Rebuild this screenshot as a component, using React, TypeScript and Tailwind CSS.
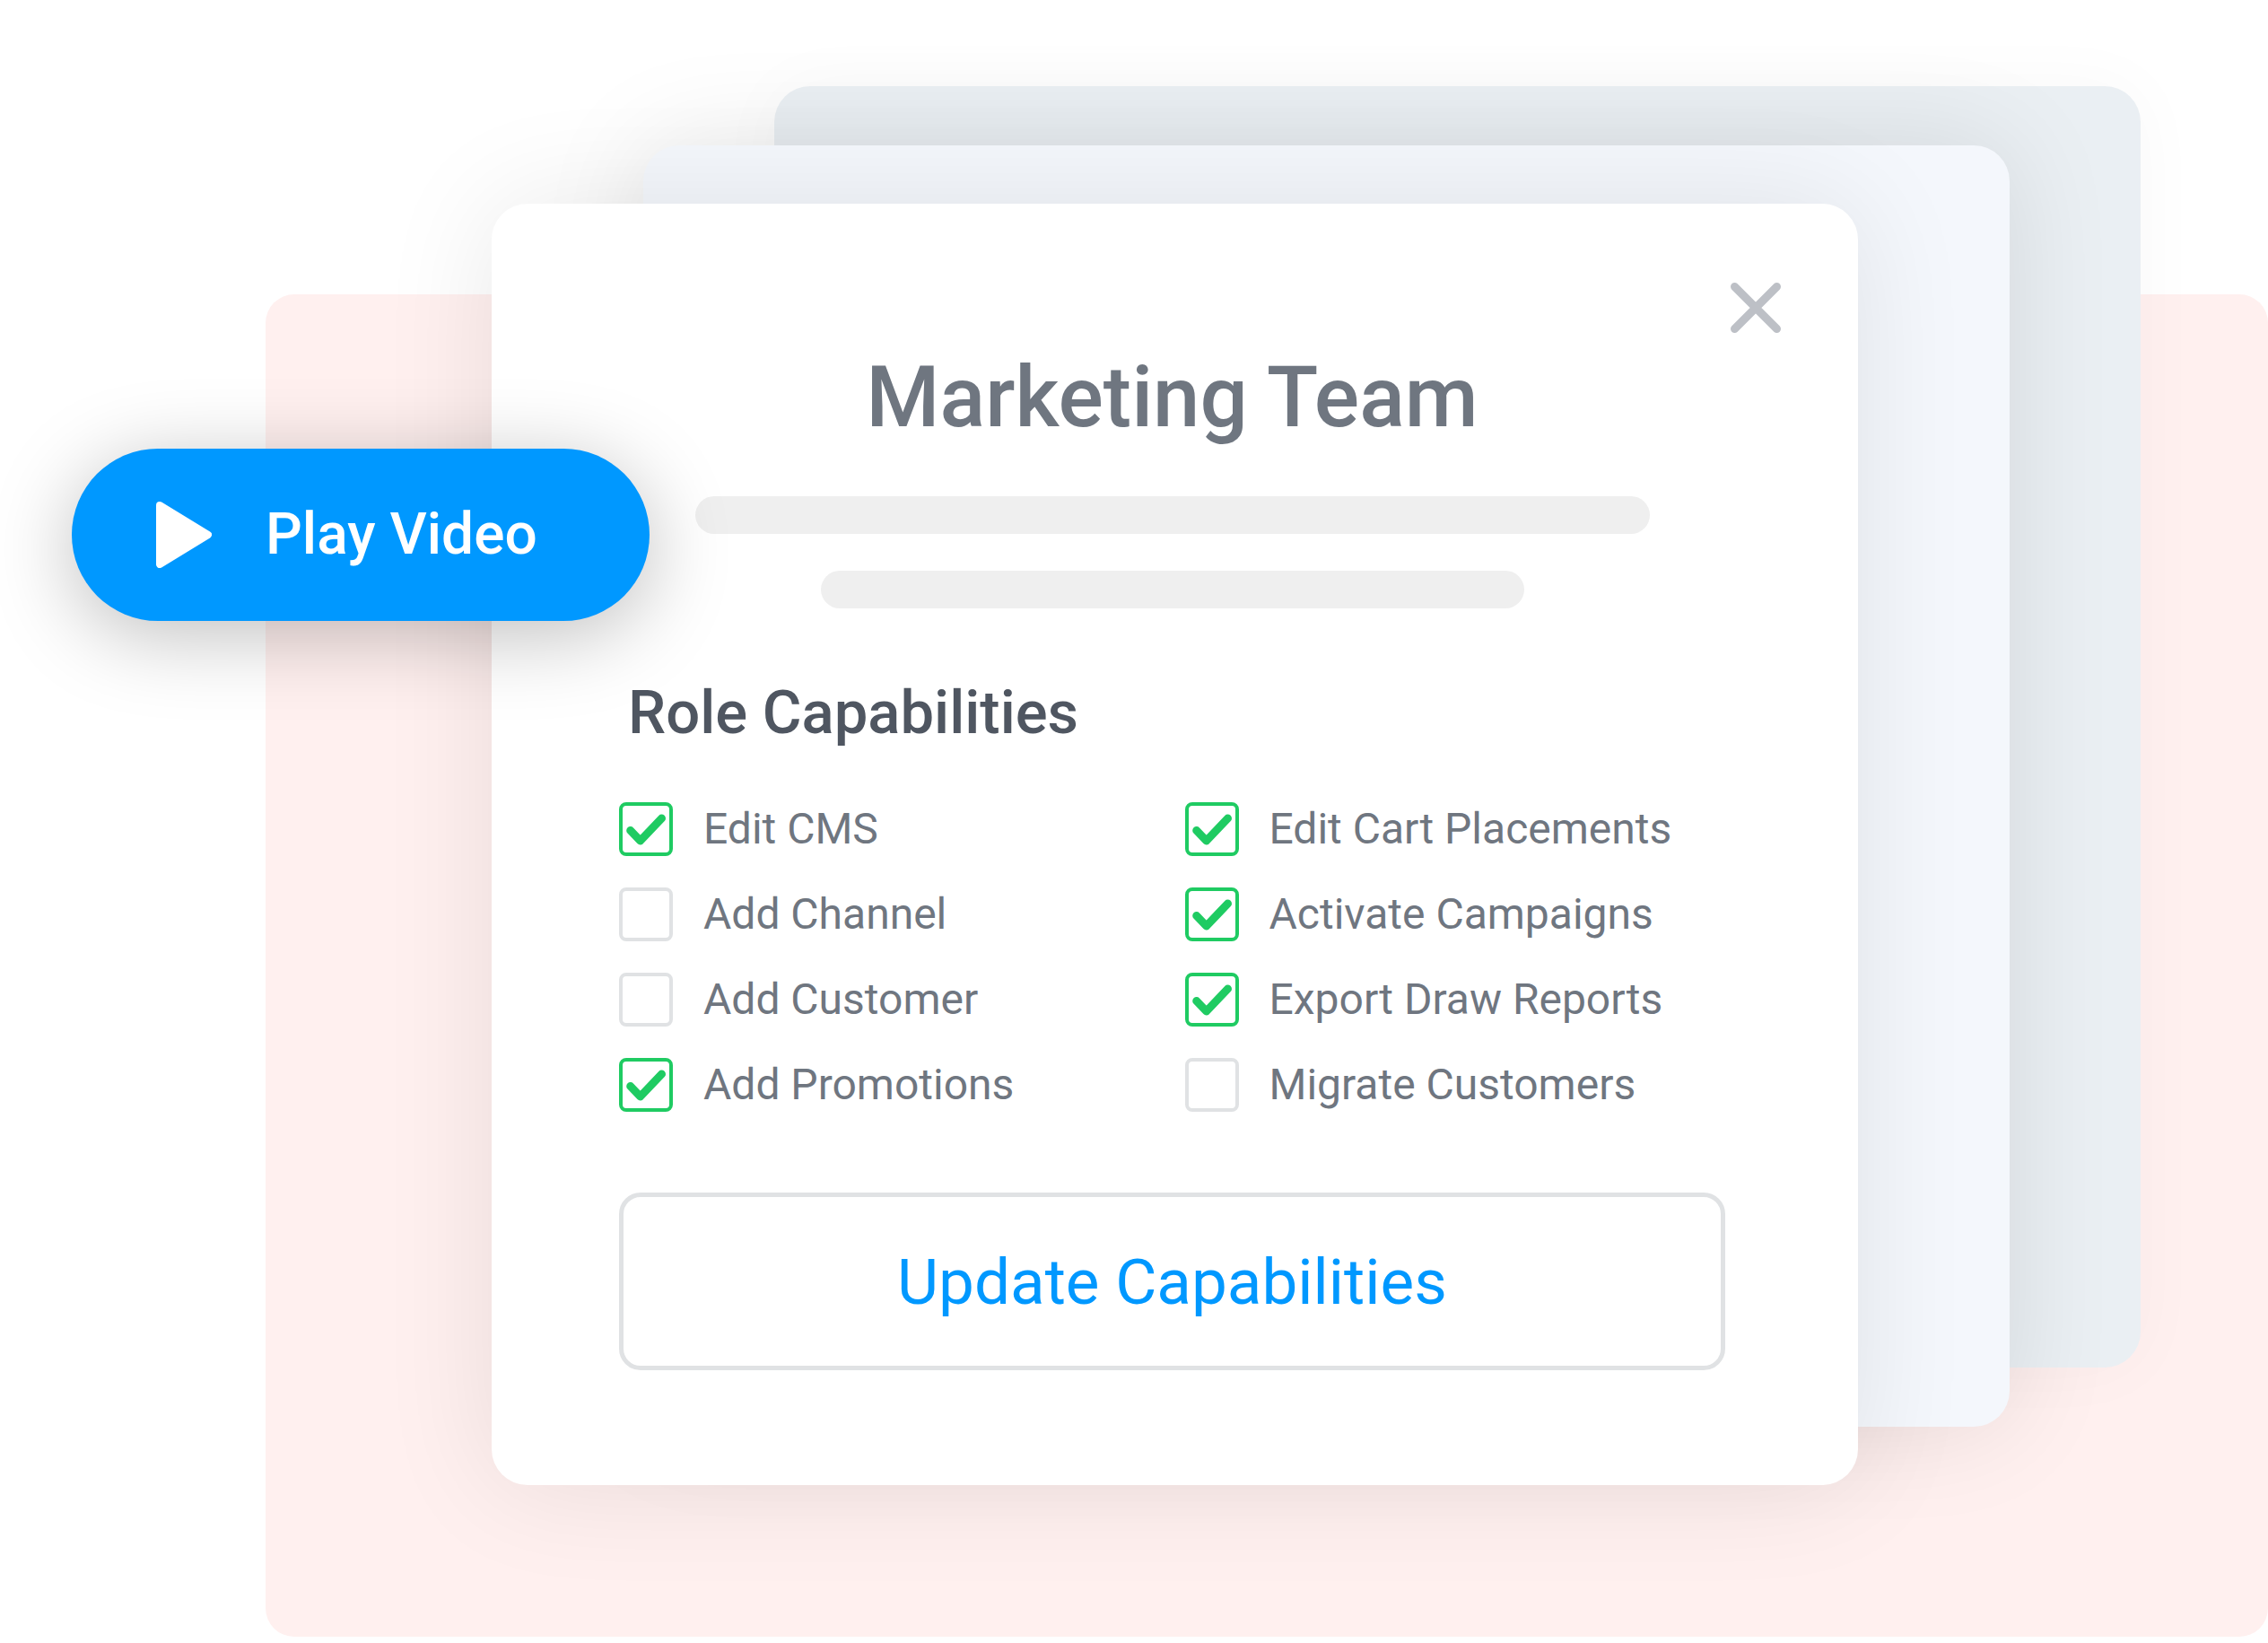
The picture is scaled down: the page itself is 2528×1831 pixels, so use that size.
import { useState } from "react";

type Capability = { label: string; enabled: boolean };

// Listed row by row: left column, then right column.
const capabilities: Capability[] = [
  { label: "Edit CMS", enabled: true },
  { label: "Edit Cart Placements", enabled: true },
  { label: "Add Channel", enabled: false },
  { label: "Activate Campaigns", enabled: true },
  { label: "Add Customer", enabled: false },
  { label: "Export Draw Reports", enabled: true },
  { label: "Add Promotions", enabled: true },
  { label: "Migrate Customers", enabled: false },
];

function CapabilityOption({ label, enabled }: Capability) {
  const [checked, setChecked] = useState(enabled);
  return (
    <label className="flex h-[60px] items-center gap-[34px] text-[48px] leading-[60px] whitespace-nowrap text-[#6f7680]">
      <span className="grid size-[60px] shrink-0">
        <input
          type="checkbox"
          checked={checked}
          onChange={(e) => setChecked(e.target.checked)}
          className="peer size-[60px] appearance-none rounded-lg border-4 border-[#e0e2e4] bg-white [grid-area:1/1] checked:border-[#1fcb62]"
        />
        <svg
          viewBox="0 0 60 60"
          aria-hidden="true"
          className="pointer-events-none hidden size-[60px] [grid-area:1/1] peer-checked:block"
        >
          <path
            d="M12.700 31.500L23.700 43L47.500 18"
            fill="none"
            stroke="#1fcb62"
            strokeWidth="9"
            strokeLinecap="round"
            strokeLinejoin="round"
          />
        </svg>
      </span>
      {label}
    </label>
  );
}

function RoleCard() {
  return (
    <section className="z-10 flex flex-col rounded-[40px] bg-white pt-[88px] pr-[148px] pb-[128px] pl-[142px] shadow-[0_0_130px_rgba(0,0,0,0.09)] [grid-area:1/1]">
      <button type="button" aria-label="Close" className="-mr-[62px] size-14 self-end">
        <svg viewBox="0 0 56 56" aria-hidden="true" className="size-14">
          <path
            d="M4.500 4.500L51.500 51.500M51.500 4.500L4.500 51.500"
            stroke="#bdc0c6"
            strokeWidth="9"
            strokeLinecap="round"
          />
        </svg>
      </button>
      <h1 className="mt-4 text-center text-[94px] leading-[112px] font-medium text-[#6f7680]">
        Marketing Team
      </h1>
      <div className="mt-[54px] flex flex-col items-center gap-[41px]">
        <div className="h-[42px] w-[1064px] max-w-full rounded-full bg-[#efefef]" />
        <div className="h-[42px] w-[784px] max-w-full rounded-full bg-[#efefef]" />
      </div>
      <h2 className="mt-[76px] ml-[10px] text-[67px] leading-[80px] font-medium text-[#4f5661]">
        Role Capabilities
      </h2>
      <div className="mt-[60px] grid grid-cols-[630fr_602fr] gap-y-[35px]">
        {capabilities.map((c) => (
          <CapabilityOption key={c.label} {...c} />
        ))}
      </div>
      <button
        type="button"
        className="mt-[90px] h-[198px] rounded-[24px] border-5 border-[#e0e2e4] pt-[2px] text-[71px] text-[#0098ff]"
      >
        Update Capabilities
      </button>
    </section>
  );
}

export default function App() {
  return (
    <main className="grid min-h-screen grid-cols-[80fr_216fr_252fr_176fr_1347fr_457fr] overflow-hidden bg-white font-['Roboto',sans-serif]">
      <div className="col-[3/7] row-start-1 mt-[328px] mb-[7px] rounded-[32px] bg-[#fff0ef]" />
      <div className="col-[4/6] row-start-1 mt-[227px] mb-[176px] grid">
        <div className="translate-x-[315px] -translate-y-[131px] rounded-[40px] bg-[#eaeff3] shadow-[0_0_80px_rgba(0,0,0,0.03)] [grid-area:1/1]" />
        <div className="translate-x-[169px] -translate-y-[65px] rounded-[40px] bg-[#f4f7fc] shadow-[0_0_120px_rgba(0,0,0,0.10)] [grid-area:1/1]" />
        <RoleCard />
      </div>
      <button
        type="button"
        className="z-20 col-[2/5] row-start-1 mt-[500px] flex h-48 items-center self-start rounded-full bg-[#0098ff] pl-[94px] text-[64px] font-medium whitespace-nowrap text-white shadow-[0_16px_90px_rgba(0,0,0,0.25)]"
      >
        <svg viewBox="0 0 62 74" aria-hidden="true" className="mr-[60px] h-[74px] w-[62px] shrink-0">
          <path
            d="M4 4L58 37L4 70Z"
            fill="currentColor"
            stroke="currentColor"
            strokeWidth="8"
            strokeLinejoin="round"
          />
        </svg>
        Play Video
      </button>
    </main>
  );
}
